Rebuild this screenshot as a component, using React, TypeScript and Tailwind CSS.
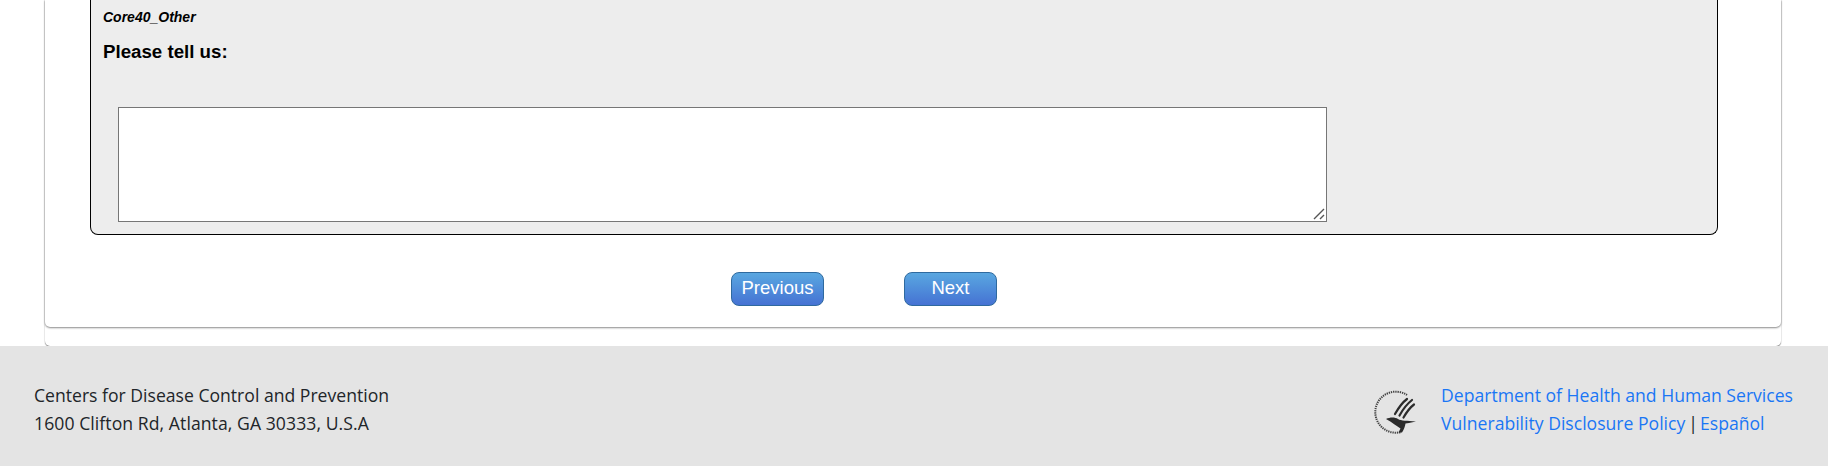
import React from "react";

const HhsLogo = () => (
  <svg width="44" height="44" viewBox="0 0 44 44" fill="none" className="shrink-0">
    <path d="M33 5A20.5 20.5 0 1 0 27 42" stroke="#444" strokeWidth="2" strokeDasharray="1.3 0.9" />
    <path d="M33 9 C29 12 25 17 21 24" stroke="#2b2b2b" strokeWidth="2.2" strokeLinecap="round" />
    <path d="M38 10 C33 14 29 19 25.5 25.5" stroke="#2b2b2b" strokeWidth="2.2" strokeLinecap="round" />
    <path d="M40 14.5 C36 17.5 33 21.5 29.5 27.5" stroke="#2b2b2b" strokeWidth="2.2" strokeLinecap="round" />
    <path d="M12 29 C16 27 21 27 24 29 C27 31 33 30.5 42 31.5 L35 33 L31.5 33.5 C31 36.5 30 39.5 28 42.5 L24.5 42.5 L26.5 38.5 C23 36.5 18 32 12 29 Z" fill="#2b2b2b" />
  </svg>
);

const Button = ({ label }: { label: string }) => (
  <button className="w-[93px] h-[34px] rounded-[8px] border border-[#2f6a9f] bg-gradient-to-b from-[#5aa7e0] to-[#4672d3] text-white text-[18.5px] font-['Liberation_Sans',sans-serif] leading-none pb-[2px]">
    {label}
  </button>
);

export default function App() {
  return (
    <div className="w-[1828px] h-[466px] overflow-hidden bg-white flex flex-col">
      <div className="h-[346px] pl-[45px] shrink-0">
        <div className="w-[1736px] h-[346px] rounded-b-[5px] bg-white shadow-[0_1px_1px_rgba(0,0,0,0.45),1px_0_1px_rgba(0,0,0,0.05),-1px_0_1px_rgba(0,0,0,0.05)]">
          <div className="h-[327px] rounded-b-[5px] bg-white shadow-[0_1px_2px_rgba(0,0,0,0.45),1px_0_1px_rgba(0,0,0,0.05),-1px_0_1px_rgba(0,0,0,0.05)] pl-[45px] pr-[63px]">
            <div className="h-[235px] rounded-b-[8px] border border-t-0 border-black bg-[#ededed] pl-[12px] font-['Liberation_Sans',sans-serif] text-black">
              <div className="pt-[9px] text-[14px] leading-[16px] font-bold italic">Core40_Other</div>
              <div className="mt-[16px] text-[18.7px] leading-[22px] font-bold">Please tell us:</div>
              <div className="relative mt-[44px] ml-[15px] w-[1209px] h-[115px]">
                <textarea className="block w-full h-full resize-none bg-white border border-[#767676] outline-none" />
                <svg width="12" height="12" viewBox="0 0 12 12" className="absolute right-[2px] bottom-[2px]">
                  <path d="M1 11 L11 1 M7 11 L11 7" stroke="#555" strokeWidth="1.4" />
                </svg>
              </div>
            </div>
            <div className="mt-[37px] pl-[641px] flex gap-[80px]">
              <Button label="Previous" />
              <Button label="Next" />
            </div>
          </div>
        </div>
      </div>
      <footer className="flex-1 bg-[#e4e4e4] pl-[34px] pr-[35px] pt-[35px] flex justify-between font-['Open_Sans',sans-serif] text-[17.6px] leading-[28px]">
        <div className="text-[#212529]">
          <div>Centers for Disease Control and Prevention</div>
          <div className="tracking-[0.07px]">1600 Clifton Rd, Atlanta, GA 30333, U.S.A</div>
        </div>
        <div className="flex gap-[23px]">
          <div className="pt-[9px]"><HhsLogo /></div>
          <div className="text-[#1a76f5]">
            <div>Department of Health and Human Services</div>
            <div className="flex">
              <span>Vulnerability Disclosure Policy</span>
              <span className="ml-[3px] text-[#212529]">|</span>
              <span className="ml-[2px]">Español</span>
            </div>
          </div>
        </div>
      </footer>
    </div>
  );
}
